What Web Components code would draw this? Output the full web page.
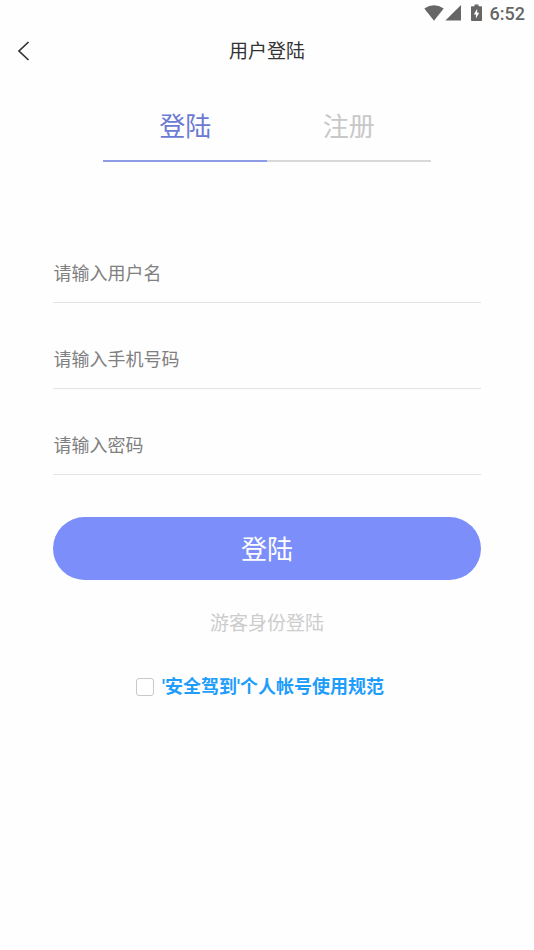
<!DOCTYPE html>
<html lang="zh-CN">
<head>
<meta charset="utf-8">
<meta name="viewport" content="width=device-width, initial-scale=1">
<title>用户登陆</title>
<style>
  body { margin: 0; background: #fefefe; color: #333; font-family: Roboto, "Noto Sans CJK SC", sans-serif; }
</style>
</head>
<body>
<login-page></login-page>
<script>
const define = (name, html, setup) => {
  const template = document.createElement('template');
  template.innerHTML = html;
  customElements.define(name, class extends HTMLElement {
    constructor() {
      super();
      this.attachShadow({ mode: 'open' }).append(template.content.cloneNode(true));
    }
    connectedCallback() { if (setup) setup(this, this.shadowRoot); }
  });
};

define('status-bar', `
  <style>
    :host { display: flex; align-items: center; justify-content: flex-end; height: 28px; padding-right: 9px; color: #666; font-size: 18px; font-weight: 500; line-height: 28px; }
    svg { display: block; fill: currentColor; }
    .signal { margin-bottom: 2px; }
    .battery { margin: 0 8px 2px 9px; }
  </style>
  <svg class="signal" width="38" height="18" viewBox="0 0 38 18" aria-hidden="true"><path d="M.3 4.6Q10 -2 19.7 4.6L10 16.7Z"/><path d="M37 1v15.6H21.4Z"/></svg>
  <svg class="battery" width="11" height="18" viewBox="0 0 11 18" aria-hidden="true"><path fill-rule="evenodd" d="M3.5.5h4v1.800h2.700q.8 0 .8.8v13.100q0 .8-.8.8H.8q-.8 0-.8-.8V3.100q0-.8.8-.8h2.700ZM6.200 4.700 2.800 10.500h2.100v4.100L8.300 8.800H6.200Z"/></svg>
  <span>6:52</span>`);

define('page-header', `
  <style>
    :host { display: grid; grid-template-columns: 48px 1fr 48px; align-items: center; height: 46px; }
    button { height: 46px; padding: 0 0 0 17px; border: 0; background: none; color: inherit; }
    svg { display: block; }
    h1 { margin: 0; padding-top: 2px; font-size: 19px; line-height: 28px; font-weight: 400; text-align: center; }
  </style>
  <button type="button" aria-label="返回"><svg width="13" height="20" viewBox="0 0 13 20" fill="none" stroke="#333" stroke-width="1.7"><path d="M11.500 1 2 10l9.500 9"/></svg></button>
  <h1><slot></slot></h1>`);

define('tab-item', `
  <style>
    :host { display: block; flex: 1; }
    button { display: block; width: 100%; padding: 16px 0 14px; border: 0; border-bottom: 2px solid #d9d9d9; background: none; color: #c8c8c8; font: inherit; font-size: 26px; line-height: 38px; }
    :host([active]) button { color: #6b7bd3; border-color: #8f9ce8; }
  </style>
  <button type="button" role="tab"><slot></slot></button>`,
  (host, root) => root.querySelector('button').setAttribute('aria-selected', host.hasAttribute('active')));

define('tab-bar', `
  <style>
    :host { display: flex; padding: 0 50px; }
  </style>
  <slot></slot>`);

define('text-field', `
  <style>
    :host { display: block; }
    input { display: block; box-sizing: border-box; width: 100%; height: 60px; padding: 2px 0 0; border: 0; border-bottom: 1px solid #e3e3e3; border-radius: 0; outline: 0; background: none; color: #333; font: inherit; font-size: 18px; }
    input::placeholder { color: #808080; opacity: 1; }
  </style>
  <input>`,
  (host, root) => {
    const input = root.querySelector('input');
    input.type = host.getAttribute('type') || 'text';
    input.placeholder = host.getAttribute('hint');
    input.setAttribute('aria-label', host.getAttribute('hint'));
  });

define('primary-button', `
  <style>
    :host { display: block; }
    button { display: block; width: 100%; padding: 14px 0 11px; border: 0; border-radius: 32px; background: #7b8ef9; color: #fff; font: inherit; font-size: 26px; line-height: 38px; }
  </style>
  <button type="submit"><slot></slot></button>`);

define('guest-link', `
  <style>
    :host { display: block; text-align: center; font-size: 19px; line-height: 24px; }
    a { color: #ccc; text-decoration: none; }
  </style>
  <a href="#guest"><slot></slot></a>`);

define('terms-check', `
  <style>
    :host { display: flex; justify-content: center; padding-right: 14px; font-size: 18px; line-height: 24px; font-weight: 700; }
    label { display: flex; align-items: center; gap: 8px; color: #1f9dfb; }
    input { appearance: none; box-sizing: border-box; width: 18px; height: 18px; margin: 0; border: 1px solid #c8c8c8; border-radius: 3px; background: #fff; }
    input:checked { background: #1f9dfb; }
    span { padding-top: 1px; }
  </style>
  <label><input type="checkbox"><span><slot></slot></span></label>`);

define('login-page', `
  <style>
    :host { display: block; }
    main { padding: 18px 10% 40px; }
    .fields { display: grid; gap: 26px; margin: 81px 0 42px; }
    guest-link { margin: 32px 0 38px; }
  </style>
  <status-bar></status-bar>
  <page-header>用户登陆</page-header>
  <main>
    <tab-bar role="tablist"><tab-item active>登陆</tab-item><tab-item>注册</tab-item></tab-bar>
    <div class="fields">
      <text-field hint="请输入用户名"></text-field>
      <text-field hint="请输入手机号码" type="tel"></text-field>
      <text-field hint="请输入密码" type="password"></text-field>
    </div>
    <primary-button>登陆</primary-button>
    <guest-link>游客身份登陆</guest-link>
    <terms-check>'安全驾到'个人帐号使用规范</terms-check>
  </main>`);
</script>
</body>
</html>
